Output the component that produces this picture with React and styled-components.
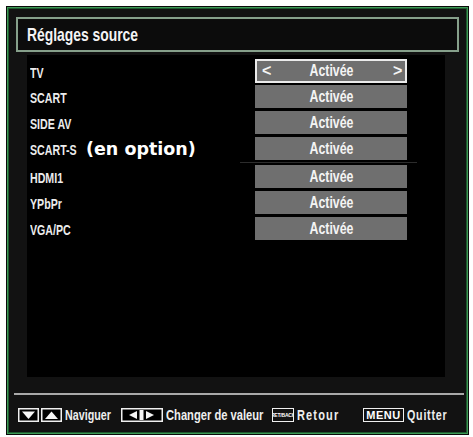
import React from 'react';
import styled, { createGlobalStyle } from 'styled-components';

const GlobalStyle = createGlobalStyle`
  html, body {
    margin: 0;
    padding: 0;
    background: #ffffff;
  }
`;

//----------------Styling-------------------------//

const Screen = styled.div`
  box-sizing: border-box;
  margin: 6px 0 0 6px;
  width: 463px;
  height: 429px;
  background: #121212;
  border: 1px solid #0a0a0a;
  box-shadow: inset 0 0 0 1px #3d9a55, inset 0 0 0 2px #1f5a30;
  padding: 10px 9px 0 9px;
  display: flex;
  flex-direction: column;
  font-family: "Liberation Sans", Arial, sans-serif;
  font-weight: bold;
  color: #f2f2f2;
`;

// the TV menu font is a narrow one: squeeze Liberation Sans horizontally
const Narrow = styled.span`
  display: inline-block;
  white-space: nowrap;
  letter-spacing: ${p => p.$ls || 0}px;
  transform: scaleX(${p => p.$sx || 0.8});
  transform-origin: ${p => p.$origin || 'left'} center;
`;

const TitleBar = styled.div`
  box-sizing: border-box;
  flex-shrink: 0;
  height: 35px;
  border: 2px solid #86a08b;
  background: #0c0c0c;
  display: flex;
  align-items: center;
  padding-left: 9px;
  font-size: 19px;
  color: #f4f4f4;
`;

const Body = styled.div`
  flex-shrink: 0;
  height: 322px;
  margin: 3px 14px 0 11px;
  background: #000;
  padding: 4px 0 0 3px;
  box-sizing: border-box;
  display: flex;
  flex-direction: column;
  gap: 3px;
`;

const Row = styled.div`
  display: grid;
  grid-template-columns: 225px 152px;
  align-items: center;
  height: 23px;
`;

const Label = styled.div`
  display: grid;
  grid-template-columns: 56px auto;
  align-items: center;
  font-size: 14px;
  color: #ececec;
  padding-top: 3px;
`;

const Note = styled.span`
  font-family: "DejaVu Sans", sans-serif;
  font-weight: bold;
  font-size: 17.5px;
  color: #ffffff;
  margin-top: -3px;
`;

const Value = styled.div`
  box-sizing: border-box;
  height: ${p => (p.$active ? '24px' : '23px')};
  background: #6f6f6f;
  border: ${p => (p.$active ? '2px solid #ebebeb' : 'none')};
  display: flex;
  align-items: center;
  justify-content: space-between;
  padding: 0 4px 0 5px;
  font-size: 16px;
  color: #f4f4f4;
`;

const Chevron = styled.span`
  width: 8px;
  text-align: center;
  font-size: 16px;
`;

const Divider = styled.div`
  height: 1px;
  background: #2c2c2c;
  margin: -1px 28px -1px 210px;
`;

const Footer = styled.div`
  flex-shrink: 0;
  margin: 16px -5px 0 -2px;
  border-top: 2px solid #a9a9a9;
  padding: 12px 0 0 4px;
  display: flex;
  align-items: center;
`;

const Hint = styled.div`
  flex-shrink: 0;
  width: ${p => p.$w}px;
  display: flex;
  align-items: center;
  gap: 3px;
  font-size: 14.5px;
  color: #eeeeee;

  & > * {
    flex-shrink: 0;
  }
`;

const Key = styled.div`
  box-sizing: border-box;
  height: 14px;
  width: ${p => p.$w}px;
  border: 1.5px solid #f0f0f0;
  display: flex;
  align-items: center;
  justify-content: center;
  overflow: hidden;
  color: #ffffff;
  font-size: ${p => p.$size}px;
  letter-spacing: ${p => (p.$size > 8 ? '0.5px' : '-0.2px')};
`;

const KeyPair = styled.span`
  display: flex;
  gap: 2px;
`;

//-------------Component Function-----------------//

const ArrowKey = ({ dir }) => (
  <svg width="21" height="14" viewBox="0 0 21 14">
    <rect x="0.75" y="0.75" width="19.5" height="12.5" fill="#000" stroke="#f0f0f0" strokeWidth="1.5" />
    {dir === 'down'
      ? <polygon points="4,3.5 17,3.5 10.5,11" fill="#f4f4f4" />
      : <polygon points="4,11 17,11 10.5,3.5" fill="#f4f4f4" />}
  </svg>
);

const SideKey = () => (
  <svg width="42" height="14" viewBox="0 0 42 14">
    <rect x="0.75" y="0.75" width="40.5" height="12.5" fill="#000" stroke="#f0f0f0" strokeWidth="1.5" />
    <polygon points="16,3 16,11 8,7" fill="#f4f4f4" />
    <rect x="18.5" y="2" width="4" height="10" fill="#f4f4f4" />
    <polygon points="25,3 25,11 33,7" fill="#f4f4f4" />
  </svg>
);

const sources = [
  { name: 'TV', active: true },
  { name: 'SCART' },
  { name: 'SIDE AV' },
  { name: 'SCART-S', note: '(en option)', split: true },
  { name: 'HDMI1' },
  { name: 'YPbPr' },
  { name: 'VGA/PC' },
];

const App = () => {
  return (
    <>
      <GlobalStyle />
      <Screen>
        <TitleBar>
          <Narrow $sx={0.73}>Réglages source</Narrow>
        </TitleBar>
        <Body>
          {sources.map(s => (
            <React.Fragment key={s.name}>
              <Row>
                <Label>
                  <Narrow $sx={0.76}>{s.name}</Narrow>
                  {s.note && <Note>{s.note}</Note>}
                </Label>
                <Value $active={s.active}>
                  <Chevron>{s.active ? '<' : ''}</Chevron>
                  <Narrow $sx={0.77} $origin="center">Activée</Narrow>
                  <Chevron>{s.active ? '>' : ''}</Chevron>
                </Value>
              </Row>
              {s.split && <Divider />}
            </React.Fragment>
          ))}
        </Body>
        <Footer>
          <Hint $w={103}>
            <KeyPair>
              <ArrowKey dir="down" />
              <ArrowKey dir="up" />
            </KeyPair>
            <Narrow $sx={0.74}>Naviguer</Narrow>
          </Hint>
          <Hint $w={151}>
            <SideKey />
            <Narrow $sx={0.77}>Changer de valeur</Narrow>
          </Hint>
          <Hint $w={91}>
            <Key $w={22} $size={5}>RET/BACK</Key>
            <Narrow $sx={0.76} $ls={1.5}>Retour</Narrow>
          </Hint>
          <Hint $w={90}>
            <Key $w={41} $size={11}>MENU</Key>
            <Narrow $sx={0.74} $ls={1}>Quitter</Narrow>
          </Hint>
        </Footer>
      </Screen>
    </>
  );
};

export default App;
